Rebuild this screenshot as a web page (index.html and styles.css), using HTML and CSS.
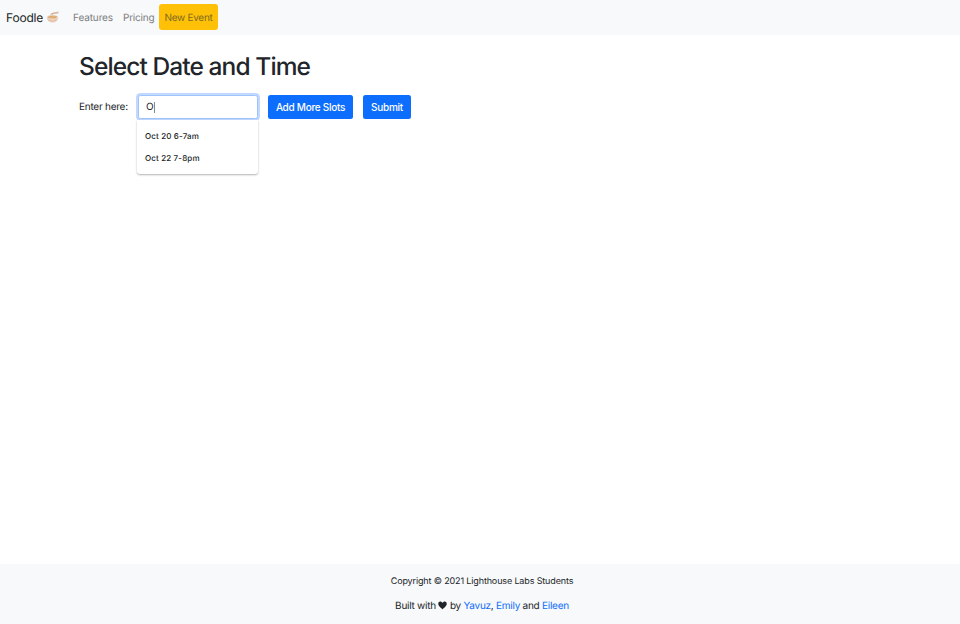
FILE: index.html
```html
<!DOCTYPE html>
<html lang="en">
<head>
<meta charset="utf-8">
<title>Foodle</title>
<link rel="stylesheet" href="styles.css">
</head>
<body>
<nav class="navbar">
  <a class="brand"><span>Foodle</span>
    <svg class="bowl" viewBox="0 0 26 26" aria-hidden="true">
      <path d="M10 12V5.5L25 2M13 12V5L25 4" fill="none" stroke="#c99878" stroke-width="1.3"/>
      <ellipse cx="13" cy="12" rx="11.5" ry="4.5" fill="#e5ddd5"/>
      <path d="M1.5 12c0 7 5 11 11.500 11s11.500-4 11.500-11c-4 4.500-19 4.500-23 0z" fill="#edd2c0"/>
      <ellipse cx="13" cy="12" rx="9" ry="3.200" fill="#e5b67c"/>
      <path d="M5 13q4-4 8-1t8-1" fill="none" stroke="#cf9468" stroke-width="1.200"/>
      <path d="M4 18q9 5 18 0" fill="none" stroke="#e3b09b" stroke-width="1.300"/>
    </svg>
  </a>
  <a class="nav-link features">Features</a>
  <a class="nav-link pricing">Pricing</a>
  <a class="nav-link new-event">New Event</a>
</nav>
<main>
  <h1><span>Select Date and Time</span></h1>
  <form class="slot-form">
    <label>Enter here:</label>
    <div class="field">
      <div class="input"><span>O</span><i class="caret"></i></div>
      <div class="suggestions">
        <div>Oct 20 6-7am</div>
        <div>Oct 22 7-8pm</div>
      </div>
    </div>
    <button type="button" class="btn add">Add More Slots</button>
    <button type="button" class="btn submit">Submit</button>
  </form>
</main>
<footer>
  <p class="copyright">Copyright © 2021 Lighthouse Labs Students</p>
  <p class="credits">Built with <svg class="heart" viewBox="0 0 16 16" aria-label="love"><path d="M8 15C6 12.500.5 9.500.5 5 .5 0 6-.5 8 3.500 10-.5 15.500 0 15.500 5c0 4.500-5.500 7.500-7.500 10z" fill="#212529"/></svg> by <a>Yavuz</a>, <a>Emily</a> and <a>Eileen</a></p>
</footer>
</body>
</html>
```
FILE: styles.css
```css
* { box-sizing: border-box; }
body {
  margin: 0;
  min-height: 624px;
  display: flex;
  flex-direction: column;
  background: #fff;
  color: #212529;
  font: 10px/15px Inter, "Liberation Sans", sans-serif;
  text-rendering: geometricPrecision;
}
.navbar {
  height: 35px;
  padding: 4px 6px 5px;
  display: flex;
  align-items: center;
  background: #f8f9fa;
}
.brand {
  width: 62px;
  display: flex;
  align-items: center;
  font-size: 12px;
  letter-spacing: -0.2px;
}
.bowl { width: 13px; height: 13px; margin-left: 3px; }
.nav-link {
  height: 26px;
  padding: 1px 5px 0;
  line-height: 26px;
  color: #7c7d7e;
  white-space: nowrap;
}
.features, .pricing { letter-spacing: -0.12px; }
.features { width: 50px; }
.pricing { width: 41px; letter-spacing: -0.22px; }
.new-event {
  width: 59px;
  padding: 1px 0 0;
  text-align: center;
  border-radius: 3px;
  background: #ffc107;
  color: #806a20;
  letter-spacing: -0.3px;
}
main { flex: 1; padding: 15px 79px 0; }
h1 {
  margin: 0;
  font-size: 24.5px;
  line-height: 32px;
  font-weight: 500;
  letter-spacing: -0.9px;
}
.slot-form { display: flex; align-items: center; margin-top: 13px; height: 24px; }
label { width: 59px; padding-top: 1px; white-space: nowrap; letter-spacing: -0.25px; }
.field { position: relative; width: 120px; margin-right: 10px; }
.input {
  height: 24px;
  padding: 1px 7px 0;
  display: flex;
  align-items: center;
  border: 1px solid #9fc4fc;
  border-radius: 2.5px;
  background: #fff;
  box-shadow: 0 0 0 2px #c2d8fe;
}
.caret { width: 1px; height: 11px; background: #888; }
.suggestions {
  position: absolute;
  top: 25px;
  left: -1px;
  width: 121px;
  height: 54px;
  padding-top: 5px;
  border-radius: 0 0 3px 3px;
  background: #fff;
  box-shadow: 0 1px 2px rgba(0, 0, 0, 0.3);
  font-size: 8px;
  font-weight: 500;
  letter-spacing: 0.14px;
}
.suggestions div { height: 22px; padding-left: 8px; line-height: 22px; }
.btn {
  height: 24px;
  padding: 0;
  border: 0;
  border-radius: 2.5px;
  background: #0d6efd;
  color: #fff;
  font: 500 10px/24px Inter, "Liberation Sans", sans-serif;
  letter-spacing: -0.28px;
  white-space: nowrap;
}
.add { width: 85px; margin-right: 10px; }
.submit { width: 48px; }
footer {
  height: 60px;
  padding: 10px 0 0 4px;
  background: #f8f9fa;
  text-align: center;
}
footer p { margin: 0; }
.copyright { font-size: 9px; letter-spacing: -0.14px; }
footer .credits { margin-top: 10px; letter-spacing: -0.26px; }
footer a { color: #0d6efd; }
.heart { width: 9px; height: 9px; vertical-align: -1px; }
```
